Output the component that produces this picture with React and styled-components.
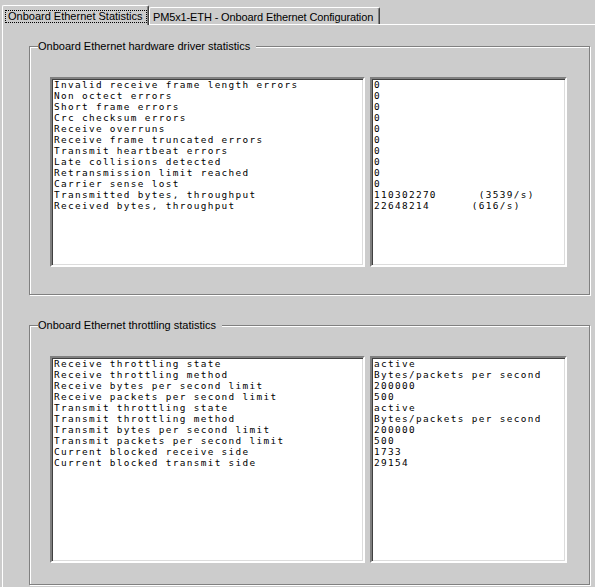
import styled, { createGlobalStyle } from 'styled-components'

const GlobalStyle = createGlobalStyle`
  html, body {
    margin: 0;
    padding: 0;
    background: #cccccc;
  }
  body {
    width: 595px;
    height: 587px;
    overflow: hidden;
    font-family: "Liberation Sans", Arial, sans-serif;
    font-size: 11px;
    color: #000;
  }
`;

const Window = styled.div`
  width: 595px;
  height: 587px;
  box-sizing: border-box;
  padding-left: 2px;
  display: flex;
  flex-direction: column;
`;

const TabStrip = styled.div`
  display: flex;
  align-items: flex-end;
  height: 24px;
  position: relative;
  z-index: 1;
`;

const Tab = styled.div`
  box-sizing: border-box;
  width: ${p => p.width}px;
  height: ${p => (p.active ? 20 : 17)}px;
  margin-bottom: ${p => (p.active ? '-1px' : '0')};
  padding: ${p => (p.active ? '4px 0 0 2px' : '3px 0 0 3px')};
  background: #cccccc;
  border-top: 1px solid #fff;
  border-left: 1px solid #fff;
  border-right: 1px solid #404040;
  border-top-left-radius: 2px;
  border-top-right-radius: 2px;
  box-shadow: inset -1px 0 0 #808080;
  line-height: 13px;
  letter-spacing: ${p => (p.active ? '0' : '-0.13px')};
  white-space: nowrap;
`;

const Focus = styled.span`
  display: inline-block;
  border: 1px dotted #000;
  padding: 0 3px 0 2px;
  line-height: 11px;
`;

const Pane = styled.div`
  flex: 1;
  border-top: 1px solid #fff;
  border-left: 1px solid #fff;
  padding: 21px 0 0 26px;
`;

const Group = styled.section`
  position: relative;
  width: 561px;
  box-sizing: border-box;
  border: 1px solid #808080;
  box-shadow: inset 1px 1px 0 #fff, 1px 1px 0 #fff;
  padding: 30px 22px ${p => p.bottom}px 20px;

  & + & {
    margin-top: 30px;
  }
`;

const Title = styled.div`
  position: absolute;
  top: -7px;
  left: 8px;
  padding: 0 6px 0 0;
  background: #cccccc;
  line-height: 13px;
  white-space: nowrap;
`;

const Lists = styled.div`
  display: grid;
  grid-template-columns: 315px 197px;
  gap: 5px;
`;

const ListBox = styled.div`
  box-sizing: border-box;
  height: ${p => p.height}px;
  background: #fff;
  border: 2px solid;
  border-color: #808080 #fff #fff #808080;
  box-shadow: inset 1px 1px 0 #404040, inset -1px -1px 0 #dcdcdc;
  padding: 0 2px;
  font-family: "DejaVu Sans Mono", "Liberation Mono", monospace;
  font-size: 9.4px;
  letter-spacing: 1.34px;
  line-height: 11px;
  white-space: pre;
  overflow: hidden;
`;

const Line = styled.div`
  height: 11px;
`;

const driverNames = [
  'Invalid receive frame length errors',
  'Non octect errors',
  'Short frame errors',
  'Crc checksum errors',
  'Receive overruns',
  'Receive frame truncated errors',
  'Transmit heartbeat errors',
  'Late collisions detected',
  'Retransmission limit reached',
  'Carrier sense lost',
  'Transmitted bytes, throughput',
  'Received bytes, throughput',
];

const driverValues = [
  '0', '0', '0', '0', '0', '0', '0', '0', '0', '0',
  '110302270      (3539/s)',
  '22648214      (616/s)',
];

const throttleNames = [
  'Receive throttling state',
  'Receive throttling method',
  'Receive bytes per second limit',
  'Receive packets per second limit',
  'Transmit throttling state',
  'Transmit throttling method',
  'Transmit bytes per second limit',
  'Transmit packets per second limit',
  'Current blocked receive side',
  'Current blocked transmit side',
];

const throttleValues = [
  'active',
  'Bytes/packets per second',
  '200000',
  '500',
  'active',
  'Bytes/packets per second',
  '200000',
  '500',
  '1733',
  '29154',
];

function StatGroup({ title, names, values, listHeight, bottom }) {
  return (
    <Group bottom={bottom}>
      <Title>{title}</Title>
      <Lists>
        <ListBox height={listHeight}>
          {names.map(n => <Line key={n}>{n}</Line>)}
        </ListBox>
        <ListBox height={listHeight}>
          {values.map((v, i) => <Line key={i}>{v}</Line>)}
        </ListBox>
      </Lists>
    </Group>
  );
}

export default function App() {
  return (
    <Window>
      <GlobalStyle />
      <TabStrip>
        <Tab active width={147}>
          <Focus>Onboard Ethernet Statistics</Focus>
        </Tab>
        <Tab width={231}>PM5x1-ETH - Onboard Ethernet Configuration</Tab>
      </TabStrip>
      <Pane>
        <StatGroup
          title="Onboard Ethernet hardware driver statistics"
          names={driverNames}
          values={driverValues}
          listHeight={190}
          bottom={27}
        />
        <StatGroup
          title="Onboard Ethernet throttling statistics"
          names={throttleNames}
          values={throttleValues}
          listHeight={207}
          bottom={21}
        />
      </Pane>
    </Window>
  );
}
